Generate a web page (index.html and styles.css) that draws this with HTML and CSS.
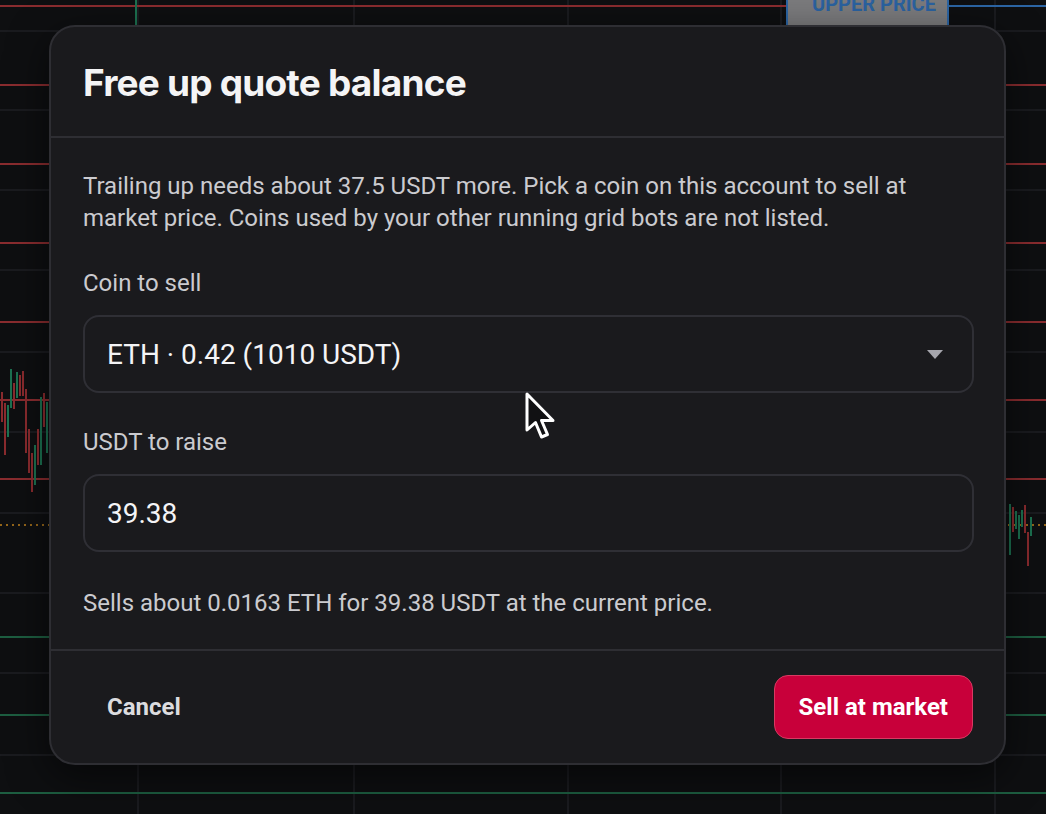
FILE: index.html
```html
<!DOCTYPE html>
<html lang="en">
<head>
  <meta charset="UTF-8" />
  <meta name="viewport" content="width=device-width, initial-scale=1.0"/>
  <title>Grid bot – free up quote balance</title>
  <link rel="stylesheet" href="styles.css">
</head>
<body>
  <div class="screen">

    <!-- Chart behind the dialog -->
    <svg class="chart" width="1046" height="814" viewBox="0 0 1046 814">
      <g class="grid">
        <line x1="138" y1="0" x2="138" y2="814"/>
        <line x1="354" y1="0" x2="354" y2="814"/>
        <line x1="568" y1="0" x2="568" y2="814"/>
        <line x1="781" y1="0" x2="781" y2="814"/>
        <line x1="995" y1="0" x2="995" y2="814"/>
        <line x1="0" y1="31" x2="1046" y2="31"/>
        <line x1="0" y1="110" x2="1046" y2="110"/>
        <line x1="0" y1="190" x2="1046" y2="190"/>
        <line x1="0" y1="270" x2="1046" y2="270"/>
        <line x1="0" y1="352" x2="1046" y2="352"/>
        <line x1="0" y1="432" x2="1046" y2="432"/>
        <line x1="0" y1="513" x2="1046" y2="513"/>
        <line x1="0" y1="593" x2="1046" y2="593"/>
        <line x1="0" y1="673" x2="1046" y2="673"/>
        <line x1="0" y1="755" x2="1046" y2="755"/>
      </g>

      <!-- grid levels -->
      <g class="lvl-sell">
        <line x1="0" y1="6" x2="786" y2="6"/>
        <line x1="0" y1="85" x2="1046" y2="85"/>
        <line x1="0" y1="164" x2="1046" y2="164"/>
        <line x1="0" y1="243" x2="1046" y2="243"/>
        <line x1="0" y1="322" x2="1046" y2="322"/>
        <line x1="0" y1="400" x2="1046" y2="400"/>
        <line x1="0" y1="479" x2="1046" y2="479"/>
      </g>
      <g class="lvl-buy">
        <line x1="0" y1="637" x2="1046" y2="637"/>
        <line x1="0" y1="715" x2="1046" y2="715"/>
        <line x1="0" y1="793" x2="1046" y2="793"/>
      </g>
      <line class="lvl-upper" x1="949" y1="6" x2="1046" y2="6"/>
      <line class="last-price" x1="0" y1="525" x2="1046" y2="525"/>

      <!-- candles -->
      <g class="up">
        <rect x="135" y="0" width="2" height="40"/>
        <rect x="7" y="405" width="2" height="32"/>
        <rect x="10" y="369" width="2" height="39"/>
        <rect x="16" y="372" width="2" height="26"/>
        <rect x="34" y="445" width="2" height="40"/>
        <rect x="40" y="397" width="2" height="68"/>
        <rect x="46" y="402" width="2" height="51"/>
        <rect x="1009" y="504" width="2" height="51"/>
        <rect x="1015" y="511" width="2" height="18"/>
        <rect x="1018" y="515" width="2" height="24"/>
        <rect x="1021" y="510" width="2" height="17"/>
        <rect x="1030" y="517" width="2" height="19"/>
      </g>
      <g class="down">
        <rect x="1" y="392" width="2" height="30"/>
        <rect x="4" y="403" width="2" height="52"/>
        <rect x="13" y="383" width="2" height="26"/>
        <rect x="19" y="375" width="2" height="21"/>
        <rect x="22" y="371" width="2" height="25"/>
        <rect x="25" y="389" width="2" height="64"/>
        <rect x="28" y="429" width="2" height="44"/>
        <rect x="31" y="453" width="2" height="39"/>
        <rect x="37" y="429" width="2" height="36"/>
        <rect x="43" y="393" width="2" height="34"/>
        <rect x="1012" y="507" width="2" height="25"/>
        <rect x="1024" y="505" width="2" height="28"/>
        <rect x="1027" y="532" width="2" height="34"/>
      </g>

      <!-- upper price tag -->
      <rect class="tag" x="787" y="-20" width="161" height="48"/>
      <text class="tag-text" x="874" y="11" text-anchor="middle">UPPER PRICE</text>
    </svg>

    <!-- Dialog -->
    <div class="modal">
      <div class="modal-head">
        <h2>Free up quote balance</h2>
      </div>

      <div class="modal-body">
        <p class="intro">Trailing up needs about 37.5 USDT more. Pick a coin on this account to sell at market price. Coins used by your other running grid bots are not listed.</p>

        <div class="field">
          <label>Coin to sell</label>
          <div class="control select">
            <span>ETH · 0.42 (1010 USDT)</span>
            <svg class="caret" width="16" height="9" viewBox="0 0 16 9"><path d="M0 0H16L8 9Z"/></svg>
          </div>
        </div>

        <div class="field">
          <label>USDT to raise</label>
          <div class="control">39.38</div>
        </div>

        <p class="note">Sells about 0.0163 ETH for 39.38 USDT at the current price.</p>
      </div>

      <div class="modal-foot">
        <button class="btn-ghost">Cancel</button>
        <button class="btn-sell">Sell at market</button>
      </div>
    </div>

    <!-- mouse pointer -->
    <svg class="pointer" width="36" height="52" viewBox="0 0 36 52">
      <path d="M3 3V39L11.5 31.5L17.5 46L23.5 43.5L17.5 29.5H29Z"/>
    </svg>
  </div>
</body>
</html>
```

FILE: styles.css
```css
body {
  margin: 0;
  background-color: #0e0f11;
  font-family: Roboto, "Liberation Sans", sans-serif;
  overflow: hidden;
}

.screen {
  position: relative;
  width: 1046px;
  height: 814px;
}

.chart {
  display: block;
}

.grid line {
  stroke: #1a1b1f;
  stroke-width: 2;
}

.lvl-sell line {
  stroke: #8a2c2f;
  stroke-width: 2;
}

.lvl-buy line {
  stroke: #1d5e41;
  stroke-width: 2;
}

.lvl-upper {
  stroke: #2c65a4;
  stroke-width: 2;
}

.last-price {
  stroke: #946519;
  stroke-width: 2;
  stroke-dasharray: 2 4;
}

.up rect {
  fill: #1c7150;
}

.down rect {
  fill: #8a2b2e;
}

.tag {
  fill: #7b7b7d;
  stroke: #2c65a4;
  stroke-width: 2;
}

.tag-text {
  font-family: Roboto, sans-serif;
  font-weight: 700;
  font-size: 20px;
  fill: #2b62a0;
}

/* dialog */
.modal {
  position: absolute;
  left: 49px;
  top: 25px;
  width: 957px;
  box-sizing: border-box;
  background-color: #1a1a1d;
  border: 2px solid #2e2e33;
  border-radius: 26px;
  box-shadow: 0 12px 40px rgba(0,0,0,0.55);
}

.modal-head {
  padding: 32px 32px 29px;
  border-bottom: 2px solid #2e2e33;
}

.modal-head h2 {
  margin: 0;
  font-family: Inter, "Open Sans", sans-serif;
  font-weight: 700;
  font-size: 37px;
  line-height: 48px;
  letter-spacing: -0.8px;
  color: #f4f4f5;
}

.modal-body {
  padding: 32px 30px 30px 32px;
}

.intro, .note {
  margin: 0;
  font-size: 24px;
  line-height: 32px;
  color: #cbcbcf;
}

.note {
  margin-top: 35px;
}

.field {
  margin-top: 33px;
}

.field label {
  display: block;
  font-size: 24px;
  line-height: 32px;
  color: #cbcbcf;
  margin-bottom: 16px;
}

.control {
  height: 78px;
  box-sizing: border-box;
  display: flex;
  align-items: center;
  padding: 0 29px 0 22px;
  border: 2px solid #2f2f35;
  border-radius: 16px;
  font-size: 28px;
  color: #f4f4f6;
}

.select {
  justify-content: space-between;
}

.caret path {
  fill: #a6a6ad;
}

.modal-foot {
  display: flex;
  justify-content: space-between;
  align-items: center;
  padding: 24px 31px 24px 32px;
  border-top: 2px solid #2e2e33;
}

.modal-foot button {
  height: 64px;
  padding: 0 24px;
  font-family: Roboto, "Liberation Sans", sans-serif;
  font-size: 24px;
  font-weight: 700;
  cursor: pointer;
}

.btn-ghost {
  background: none;
  border: none;
  color: #dcdcdf;
}

.btn-sell {
  background-color: #c8003a;
  border: 1px solid #d83a62;
  border-radius: 14px;
  color: #ffffff;
}

.pointer {
  position: absolute;
  left: 524px;
  top: 391px;
}

.pointer path {
  fill: #111113;
  stroke: #ffffff;
  stroke-width: 3;
  stroke-linejoin: round;
}
```
